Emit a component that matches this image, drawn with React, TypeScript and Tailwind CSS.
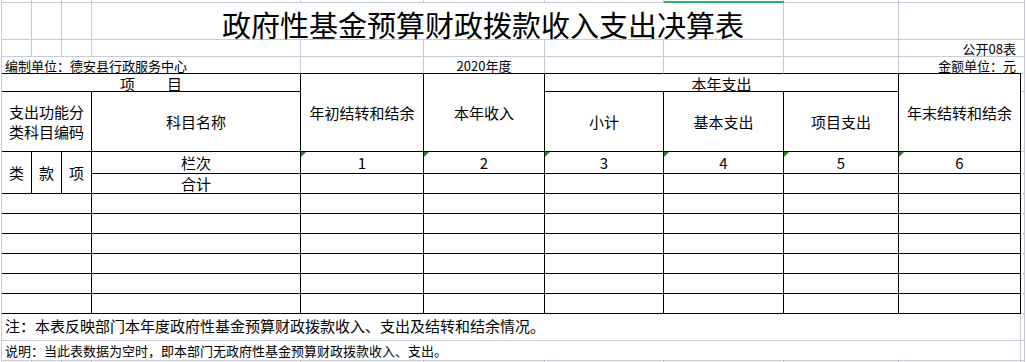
import React from 'react';

// spreadsheet gridline + border shorthands (each cell owns its right / bottom edge)
const LR = 'border-r border-r-[#c5cad8]';
const LB = 'border-b border-b-[#c5cad8]';
const KR = 'border-r border-r-black';
const KB = 'border-b border-b-black';

interface CellProps {
  className?: string;
  children?: React.ReactNode;
}

const C: React.FC<CellProps> = ({ className = '', children }) => (
  <div className={`flex items-center justify-center whitespace-nowrap leading-none ${className}`}>
    {children}
  </div>
);

// little green "number stored as text" marker
const Flag = () => (
  <span className="absolute left-0 top-0 h-0 w-0 border-t-[5px] border-r-[5px] border-t-[#1f8a1f] border-r-transparent" />
);

const dataRows = [
  'row-start-9',
  'row-start-10',
  'row-start-11',
  'row-start-12',
  'row-start-13',
  'row-start-14',
];

export default function App() {
  return (
    <div className="relative h-[362px] w-[1026px] overflow-hidden bg-white font-['Noto_Sans_CJK_SC',sans-serif] text-black">
      <div className="ml-px grid h-[362px] w-[1025px] grid-cols-[30px_30px_30px_209px_123px_121px_119px_120px_115px_122px_4px_1fr] grid-rows-[3px_37px_17px_17px_18px_60px_22px_20px_20px_20px_20px_20px_20px_20px_27px_20px_1fr] border-l border-l-[#c5cad8]">
        {/* top partial row */}
        <C className={`row-start-1 col-start-1 ${LR} ${LB}`} />
        <C className={`row-start-1 col-start-2 ${LR} ${LB}`} />
        <C className={`row-start-1 col-start-3 ${LR} ${LB}`} />
        <C className={`row-start-1 col-start-4 ${LR} ${LB}`} />
        <C className={`row-start-1 col-start-5 ${LR} ${LB}`} />
        <C className={`row-start-1 col-start-6 ${LR} ${LB}`} />
        <C className={`row-start-1 col-start-7 ${LR} ${LB}`} />
        <C className={`row-start-1 col-start-8 ${LR} ${LB}`} />
        <C className={`row-start-1 col-start-9 ${LR} ${LB}`} />
        <C className={`row-start-1 col-start-10 col-span-2 ${LR} ${LB}`} />

        {/* title */}
        <C className={`row-start-2 col-start-1 ${LR} ${LB}`} />
        <C className={`row-start-2 col-start-2 ${LR} ${LB}`} />
        <C className={`row-start-2 col-start-3 ${LR} ${LB}`} />
        <C className={`row-start-2 col-start-4 col-span-5 items-end justify-start pl-[130px] text-[29px] ${LR} ${LB}`}>
          政府性基金预算财政拨款收入支出决算表
        </C>
        <C className={`row-start-2 col-start-9 ${LR} ${LB}`} />
        <C className={`row-start-2 col-start-10 col-span-2 ${LR} ${LB}`} />

        {/* 公开08表 */}
        <C className={`row-start-3 col-start-1 ${LR} ${LB}`} />
        <C className={`row-start-3 col-start-2 ${LR} ${LB}`} />
        <C className={`row-start-3 col-start-3 ${LR} ${LB}`} />
        <C className={`row-start-3 col-start-4 ${LR} ${LB}`} />
        <C className={`row-start-3 col-start-5 ${LR} ${LB}`} />
        <C className={`row-start-3 col-start-6 ${LR} ${LB}`} />
        <C className={`row-start-3 col-start-7 ${LR} ${LB}`} />
        <C className={`row-start-3 col-start-8 ${LR} ${LB}`} />
        <C className={`row-start-3 col-start-9 ${LR} ${LB}`} />
        <C className={`row-start-3 col-start-10 col-span-2 items-end justify-end pr-[8px] pb-px text-[13px] ${LR} ${LB}`}>
          公开08表
        </C>

        {/* 编制单位 */}
        <C className={`row-start-4 col-start-1 col-span-4 items-end justify-start pl-[3px] pb-px text-[13px] ${LR} ${KB}`}>
          编制单位：德安县行政服务中心
        </C>
        <C className={`row-start-4 col-start-5 ${LR} ${KB}`} />
        <C className={`row-start-4 col-start-6 items-end pb-px text-[13px] ${LR} ${KB}`}>2020年度</C>
        <C className={`row-start-4 col-start-7 ${LR} ${KB}`} />
        <C className={`row-start-4 col-start-8 ${LR} ${KB}`} />
        <C className={`row-start-4 col-start-9 ${LR} ${KB}`} />
        <C className={`row-start-4 col-start-10 items-end justify-end pr-[5px] pb-px text-[13px] ${KB}`}>
          金额单位：元
        </C>
        <C className={`row-start-4 col-start-11 ${LR} ${LB}`} />

        {/* header row 1 */}
        <C className={`row-start-5 col-start-1 col-span-4 gap-[32px] pt-px text-[15px] ${KR} ${KB}`}>
          <span>项</span>
          <span>目</span>
        </C>
        <C className={`row-start-5 row-span-2 col-start-5 text-[15px] ${KR} ${KB}`}>年初结转和结余</C>
        <C className={`row-start-5 row-span-2 col-start-6 text-[15px] ${KR} ${KB}`}>本年收入</C>
        <C className={`row-start-5 col-start-7 col-span-3 pt-px text-[15px] ${KR} ${KB}`}>本年支出</C>
        <C className={`row-start-5 row-span-2 col-start-10 text-[15px] ${KR} ${KB}`}>年末结转和结余</C>
        <C className={`row-start-5 col-start-11 ${LR} ${LB}`} />

        {/* header row 2 */}
        <C className={`row-start-6 col-start-1 col-span-3 flex-col text-[15px] ${KR} ${KB}`}>
          <span className="block h-[20px] leading-[20px]">支出功能分</span>
          <span className="block h-[20px] leading-[20px]">类科目编码</span>
        </C>
        <C className={`row-start-6 col-start-4 text-[15px] ${KR} ${KB}`}>科目名称</C>
        <C className={`row-start-6 col-start-7 text-[15px] ${KR} ${KB}`}>小计</C>
        <C className={`row-start-6 col-start-8 text-[15px] ${KR} ${KB}`}>基本支出</C>
        <C className={`row-start-6 col-start-9 text-[15px] ${KR} ${KB}`}>项目支出</C>
        <C className={`row-start-6 col-start-11 ${LR} ${LB}`} />

        {/* 栏次 */}
        <C className={`row-start-7 row-span-2 col-start-1 text-[15px] ${KR} ${KB}`}>类</C>
        <C className={`row-start-7 row-span-2 col-start-2 text-[15px] ${KR} ${KB}`}>款</C>
        <C className={`row-start-7 row-span-2 col-start-3 text-[15px] ${KR} ${KB}`}>项</C>
        <C className={`row-start-7 col-start-4 text-[15px] ${KR} ${KB}`}>栏次</C>
        <C className={`relative row-start-7 col-start-5 text-[15px] ${KR} ${KB}`}><Flag />1</C>
        <C className={`relative row-start-7 col-start-6 text-[15px] ${KR} ${KB}`}><Flag />2</C>
        <C className={`relative row-start-7 col-start-7 text-[15px] ${KR} ${KB}`}><Flag />3</C>
        <C className={`relative row-start-7 col-start-8 text-[15px] ${KR} ${KB}`}><Flag />4</C>
        <C className={`relative row-start-7 col-start-9 text-[15px] ${KR} ${KB}`}><Flag />5</C>
        <C className={`relative row-start-7 col-start-10 text-[15px] ${KR} ${KB}`}><Flag />6</C>
        <C className={`row-start-7 col-start-11 ${LR} ${LB}`} />

        {/* 合计 */}
        <C className={`row-start-8 col-start-4 text-[15px] ${KR} ${KB}`}>合计</C>
        <C className={`row-start-8 col-start-5 ${KR} ${KB}`} />
        <C className={`row-start-8 col-start-6 ${KR} ${KB}`} />
        <C className={`row-start-8 col-start-7 ${KR} ${KB}`} />
        <C className={`row-start-8 col-start-8 ${KR} ${KB}`} />
        <C className={`row-start-8 col-start-9 ${KR} ${KB}`} />
        <C className={`row-start-8 col-start-10 ${KR} ${KB}`} />
        <C className={`row-start-8 col-start-11 ${LR} ${LB}`} />

        {/* empty data rows */}
        {dataRows.map((r) => (
          <React.Fragment key={r}>
            <C className={`${r} col-start-1 col-span-3 ${KR} ${KB}`} />
            <C className={`${r} col-start-4 ${KR} ${KB}`} />
            <C className={`${r} col-start-5 ${KR} ${KB}`} />
            <C className={`${r} col-start-6 ${KR} ${KB}`} />
            <C className={`${r} col-start-7 ${KR} ${KB}`} />
            <C className={`${r} col-start-8 ${KR} ${KB}`} />
            <C className={`${r} col-start-9 ${KR} ${KB}`} />
            <C className={`${r} col-start-10 ${KR} ${KB}`} />
            <C className={`${r} col-start-11 ${LR} ${LB}`} />
          </React.Fragment>
        ))}

        {/* notes */}
        <C className={`row-start-15 col-start-1 col-span-10 justify-start pl-[3px] pb-[3px] text-[15px] ${LR} ${LB}`}>
          注：本表反映部门本年度政府性基金预算财政拨款收入、支出及结转和结余情况。
        </C>
        <C className={`row-start-15 col-start-11 ${LR} ${LB}`} />
        <C className={`row-start-16 col-start-1 col-span-10 justify-start pl-[3px] text-[13px] ${LR} ${LB}`}>
          说明：当此表数据为空时，即本部门无政府性基金预算财政拨款收入、支出。
        </C>
        <C className={`row-start-16 col-start-11 ${LR} ${LB}`} />

        {/* bottom partial row */}
        <C className={`row-start-17 col-start-1 ${LR}`} />
        <C className={`row-start-17 col-start-2 ${LR}`} />
        <C className={`row-start-17 col-start-3 ${LR}`} />
        <C className={`row-start-17 col-start-4 ${LR}`} />
        <C className={`row-start-17 col-start-5 ${LR}`} />
        <C className={`row-start-17 col-start-6 ${LR}`} />
        <C className={`row-start-17 col-start-7 ${LR}`} />
        <C className={`row-start-17 col-start-8 ${LR}`} />
        <C className={`row-start-17 col-start-9 ${LR}`} />
        <C className={`row-start-17 col-start-10 ${LR}`} />
        <C className={`row-start-17 col-start-11 ${LR}`} />
      </div>

      {/* selected column marker in the header strip */}
      <div className="absolute left-[664px] top-px h-[2px] w-[120px] bg-[#2bb07a]" />
    </div>
  );
}
